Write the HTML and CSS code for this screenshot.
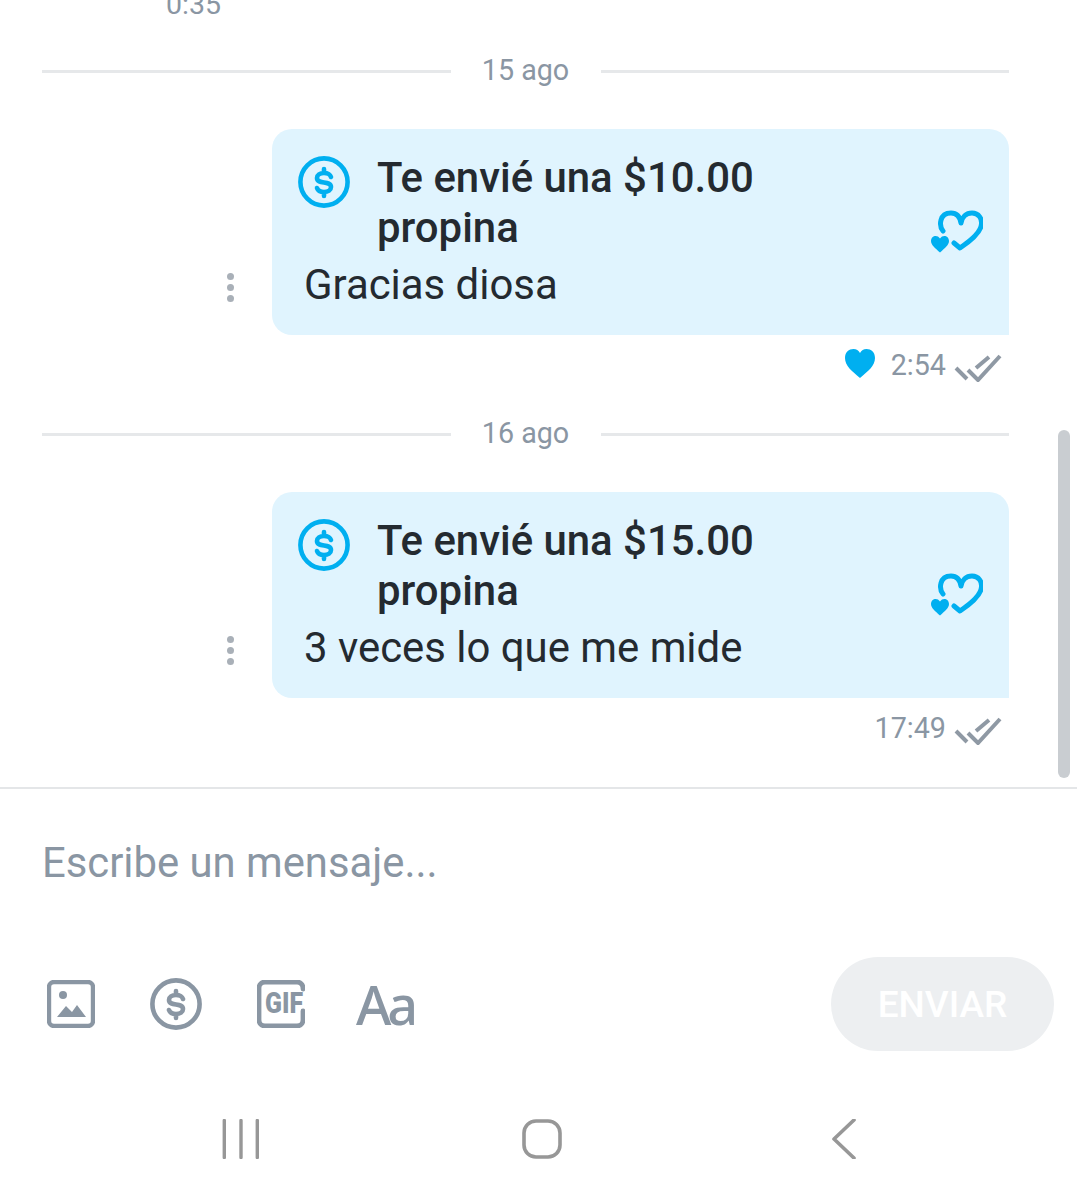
FILE: index.html
```html
<!DOCTYPE html>
<html lang="es">
<head>
    <meta charset="UTF-8">
    <meta name="viewport" content="width=device-width, initial-scale=1.0">
    <title>Chat</title>
    <link rel="stylesheet" href="styles.css">
</head>
<body>
    <svg class="defs" width="0" height="0">
        <symbol id="tick-double" viewBox="0 0 48 28">
            <path d="M2 14l11 11M14 16l10 10L46 2M22 14L35 3" fill="none" stroke="#8f99a4" stroke-width="4"/>
        </symbol>
        <symbol id="tip-like" viewBox="0 0 54 46">
            <path d="M14 22C10 17 10 4 22 4c6 0 9 4 10 10 1-6 5-10 11-10 7 0 10 6 9.500 11C52 24 40 33 31 39l-6-5" fill="none" stroke="#00aff0" stroke-width="5" stroke-linecap="round" stroke-linejoin="round"/>
            <path d="M11 43.500C6 39 2 36 2 32c0-5 6-7 9-2.500C14 25 20 27 20 32c0 4-4 7-9 11.500z" fill="#00aff0"/>
        </symbol>
        <symbol id="dollar-blue" viewBox="0 0 52 52">
            <circle cx="26" cy="26" r="23.600" fill="none" stroke="#00aff0" stroke-width="4.600"/>
            <path d="M33 21c-1-3-4-4-7-4-4 0-7 2-7 5 0 7 14 2 14 9 0 3-3 5-7 5-3 0-6-1-7-4M26 13v4M26 36v4" fill="none" stroke="#00aff0" stroke-width="4.600" stroke-linecap="round"/>
        </symbol>
    </svg>

    <main class="chat">
        <div class="clipped-time">0:35</div>

        <div class="date-row"><span class="date-line"></span><span class="date-label">15 ago</span><span class="date-line"></span></div>

        <div class="message">
            <span class="dots"><i></i><i></i><i></i></span>
            <div class="bubble">
                <div class="tip-title">
                    <svg class="tip-icon"><use href="#dollar-blue"/></svg>
                    <div class="tip-text">Te envié una $10.00 propina</div>
                </div>
                <div class="tip-note">Gracias diosa</div>
                <svg class="like-icon"><use href="#tip-like"/></svg>
            </div>
        </div>
        <div class="meta">
            <svg class="heart" viewBox="0 0 32 30"><path d="M16 30C8 23 1 18 1 10 1 4 5 1 9.500 1c3 0 5 1.500 6.500 4 1.500-2.500 3.500-4 6.500-4C27 1 31 4 31 10c0 8-7 13-15 20z" fill="#00aff0"/></svg>
            <span class="time">2:54</span>
            <svg class="ticks"><use href="#tick-double"/></svg>
        </div>

        <div class="date-row second"><span class="date-line"></span><span class="date-label">16 ago</span><span class="date-line"></span></div>

        <div class="message">
            <span class="dots"><i></i><i></i><i></i></span>
            <div class="bubble">
                <div class="tip-title">
                    <svg class="tip-icon"><use href="#dollar-blue"/></svg>
                    <div class="tip-text">Te envié una $15.00 propina</div>
                </div>
                <div class="tip-note">3 veces lo que me mide</div>
                <svg class="like-icon"><use href="#tip-like"/></svg>
            </div>
        </div>
        <div class="meta">
            <span class="time">17:49</span>
            <svg class="ticks"><use href="#tick-double"/></svg>
        </div>

        <div class="scrollbar"></div>
    </main>

    <section class="composer">
        <div class="placeholder">Escribe un mensaje...</div>
        <div class="tools">
            <svg class="tool photo" viewBox="0 0 48 48">
                <rect x="2" y="2" width="44" height="44" rx="5" fill="none" stroke="#8a96a3" stroke-width="4.400"/>
                <circle cx="16" cy="15" r="4" fill="#8a96a3"/>
                <path d="M10 37l9-11 6 6 5-7 9 12z" fill="#8a96a3"/>
            </svg>
            <svg class="tool wide" viewBox="0 0 52 52">
                <circle cx="26" cy="26" r="23.600" fill="none" stroke="#8a96a3" stroke-width="4.600"/>
                <path d="M33 21c-1-3-4-4-7-4-4 0-7 2-7 5 0 7 14 2 14 9 0 3-3 5-7 5-3 0-6-1-7-4M26 13v4M26 36v4" fill="none" stroke="#8a96a3" stroke-width="4.600" stroke-linecap="round"/>
            </svg>
            <svg class="tool gif" viewBox="0 0 48 48">
                <path d="M46 9V8a6 6 0 0 0-6-6H8a6 6 0 0 0-6 6v32a6 6 0 0 0 6 6h32a6 6 0 0 0 6-6v-9" fill="none" stroke="#8a96a3" stroke-width="4.800" stroke-linecap="round"/>
                <text class="gif-text" x="8" y="33" textLength="38" lengthAdjust="spacingAndGlyphs">GIF</text>
            </svg>
            <span class="font-tool">Aa</span>
            <button class="send" type="button" disabled>ENVIAR</button>
        </div>
    </section>

    <nav class="nav-bar">
        <svg class="nav-icon" viewBox="0 0 40 40"><path d="M2.300 1.500v37M19 1.500v37M35.300 1.500v37" stroke="#979797" stroke-width="3.400" stroke-linecap="round"/></svg>
        <svg class="nav-icon home" viewBox="0 0 40 40"><rect x="2" y="2" width="36" height="36" rx="12" fill="none" stroke="#979797" stroke-width="3.600"/></svg>
        <svg class="nav-icon back" viewBox="0 0 40 40"><path d="M22 1L2 20l20 19" fill="none" stroke="#979797" stroke-width="3.600" stroke-linecap="round" stroke-linejoin="round"/></svg>
    </nav>
</body>
</html>
```

FILE: styles.css
```css
body {
    font-family: Roboto, Arial, sans-serif;
    background-color: #fff;
    margin: 0;
    height: 1200px;
    overflow: hidden;
    color: #242a30;
}
.defs {
    position: absolute;
}
.chat {
    position: relative;
    height: 789px;
    box-sizing: border-box;
    padding: 0 68px 0 42px;
    border-bottom: 2px solid #e4e6e8;
    overflow: hidden;
}
.clipped-time {
    margin-top: -12px;
    margin-left: 124px;
    height: 34px;
    font-size: 28.500px;
    line-height: 34px;
    color: #8a96a3;
}
.date-row {
    display: flex;
    align-items: center;
    margin-top: 32px;
    height: 34px;
}
.date-row.second {
    margin-top: 22px;
}
.date-line {
    flex: 1;
    height: 3px;
    background-color: #e6e8ea;
}
.date-label {
    width: 150px;
    margin-top: -2px;
    text-align: center;
    font-size: 28.700px;
    color: #8a96a3;
}
.message {
    display: flex;
    align-items: flex-end;
    justify-content: flex-end;
    margin-top: 41px;
}
.dots {
    display: flex;
    flex-direction: column;
    gap: 4px;
    margin-right: 38px;
    margin-bottom: 33px;
}
.dots i {
    width: 7px;
    height: 7px;
    border-radius: 50%;
    background-color: #a9b0b8;
}
.bubble {
    position: relative;
    width: 737px;
    height: 206px;
    box-sizing: border-box;
    padding: 24px 32px 0;
    background-color: #e0f4fe;
    border-radius: 20px 20px 0 20px;
}
.tip-title {
    display: flex;
    align-items: flex-start;
}
.tip-icon {
    width: 52px;
    height: 52px;
    flex-shrink: 0;
    margin: 3px 0 0 -6px;
}
.tip-text {
    width: 400px;
    margin-left: 27px;
    font-size: 41.900px;
    line-height: 50px;
    font-weight: 500;
}
.tip-note {
    margin-top: 7px;
    font-size: 41.900px;
    line-height: 50px;
}
.like-icon {
    position: absolute;
    right: 26px;
    top: 80px;
    width: 54px;
    height: 46px;
}
.meta {
    display: flex;
    align-items: center;
    justify-content: flex-end;
    height: 60px;
    padding-right: 7px;
}
.heart {
    width: 32px;
    height: 30px;
    margin-right: 15px;
    margin-top: -4px;
}
.time {
    font-size: 28.700px;
    color: #8a96a3;
}
.ticks {
    width: 48px;
    height: 28px;
    margin-left: 8px;
    margin-top: 6px;
}
.scrollbar {
    position: absolute;
    right: 7px;
    top: 430px;
    width: 12px;
    height: 348px;
    border-radius: 6px;
    background-color: #c9cdd1;
}
.composer {
    padding: 0 23px 0 42px;
}
.placeholder {
    height: 153px;
    padding-top: 50px;
    box-sizing: border-box;
    font-size: 41.800px;
    line-height: 48px;
    color: #8a96a3;
}
.tools {
    display: flex;
    align-items: center;
    height: 94px;
    margin-top: 15px;
}
.tool {
    width: 48px;
    height: 48px;
    margin-left: 5px;
    margin-right: 55px;
    flex-shrink: 0;
}
.tool.wide {
    width: 52px;
    height: 52px;
    margin-left: 0;
    margin-right: 55px;
}
.tool.gif {
    margin-left: 0;
    margin-right: 51px;
}
.gif-text {
    font-family: Roboto, Arial, sans-serif;
    font-size: 30px;
    font-weight: 900;
    fill: #8a96a3;
}
.font-tool {
    font-size: 54px;
    font-family: "Noto Sans", sans-serif;
    font-weight: 500;
    letter-spacing: -4px;
    color: #8a96a3;
}
.send {
    margin-left: auto;
    width: 223px;
    height: 94px;
    border: none;
    border-radius: 47px;
    background-color: #edeff1;
    color: #fff;
    font-family: Roboto, Arial, sans-serif;
    font-size: 37px;
    font-weight: 500;
}
.nav-bar {
    display: flex;
    align-items: center;
    margin-top: 68px;
    padding-left: 222px;
}
.nav-icon {
    width: 40px;
    height: 40px;
}
.nav-icon.home {
    margin-left: 260px;
}
.nav-icon.back {
    margin-left: 270px;
}
```
